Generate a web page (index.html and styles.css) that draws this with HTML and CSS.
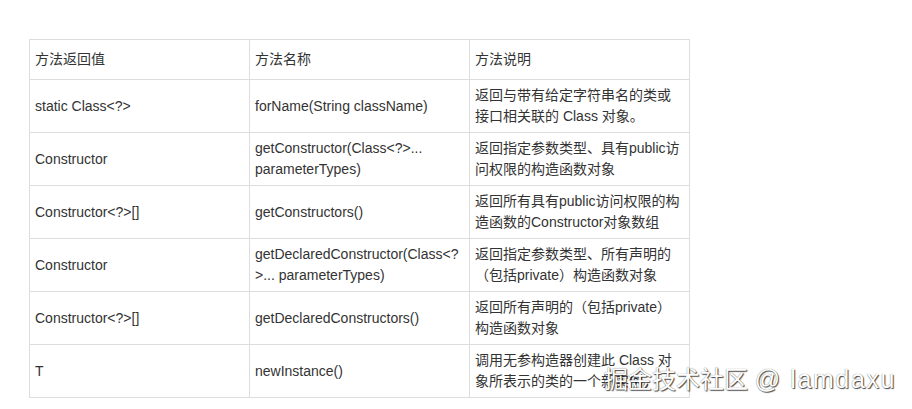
FILE: index.html
```html
<!DOCTYPE html>
<html lang="zh-CN">
<head>
<meta charset="utf-8">
<title>Class 构造方法</title>
<link rel="stylesheet" href="styles.css">
</head>
<body>
<div class="page">
  <table class="api-table">
    <colgroup>
      <col class="col">
      <col class="col">
      <col class="col">
    </colgroup>
    <thead>
      <tr>
        <th>方法返回值</th>
        <th>方法名称</th>
        <th>方法说明</th>
      </tr>
    </thead>
    <tbody>
      <tr>
        <td>static Class&lt;?&gt;</td>
        <td>forName(String className)</td>
        <td>返回与带有给定字符串名的类或接口相关联的 Class 对象。</td>
      </tr>
      <tr>
        <td>Constructor</td>
        <td>getConstructor(Class&lt;?&gt;... parameterTypes)</td>
        <td>返回指定参数类型、具有public访问权限的构造函数对象</td>
      </tr>
      <tr>
        <td>Constructor&lt;?&gt;[]</td>
        <td>getConstructors()</td>
        <td>返回所有具有public访问权限的构造函数的Constructor对象数组</td>
      </tr>
      <tr>
        <td>Constructor</td>
        <td>getDeclaredConstructor(Class&lt;?&gt;... parameterTypes)</td>
        <td>返回指定参数类型、所有声明的（包括private）构造函数对象</td>
      </tr>
      <tr>
        <td>Constructor&lt;?&gt;[]</td>
        <td>getDeclaredConstructors()</td>
        <td>返回所有声明的（包括private）构造函数对象</td>
      </tr>
      <tr>
        <td>T</td>
        <td>newInstance()</td>
        <td>调用无参构造器创建此 Class 对象所表示的类的一个新实例。</td>
      </tr>
    </tbody>
  </table>
  <div class="watermark">掘金技术社区 <span class="handle">@ lamdaxu</span></div>
</div>
</body>
</html>
```

FILE: styles.css
```css
html, body {
  margin: 0;
  padding: 0;
  background: #ffffff;
}

.page {
  position: relative;
  width: 912px;
  height: 409px;
  box-sizing: border-box;
  padding: 39px 0 0 29px;
  overflow: hidden;
  font-family: "Liberation Sans", "Noto Sans CJK SC", sans-serif;
  font-size: 14px;
  color: #333333;
}

.api-table {
  border-collapse: collapse;
  table-layout: fixed;
  width: 660px;
}

.api-table .col {
  width: 220px;
}

.api-table th,
.api-table td {
  border: 1px solid #dddddd;
  text-align: left;
  vertical-align: middle;
  font-weight: normal;
  line-height: 21px;
  overflow-wrap: break-word;
  word-wrap: break-word;
}

.api-table th {
  padding: 9px 5px;
}

.api-table td {
  padding: 5px 5px;
}

.watermark {
  position: absolute;
  right: 16px;
  bottom: 15px;
  font-family: "Liberation Sans", "Noto Sans CJK SC", sans-serif;
  font-size: 24px;
  line-height: 28px;
  color: #ffffff;
  white-space: nowrap;
  text-shadow: 1px 1px 1px rgba(0, 0, 0, 0.7), 0 0 1px rgba(0, 0, 0, 0.6);
}

.watermark .handle {
  letter-spacing: 1.6px;
  font-size: 25px;
}
```
